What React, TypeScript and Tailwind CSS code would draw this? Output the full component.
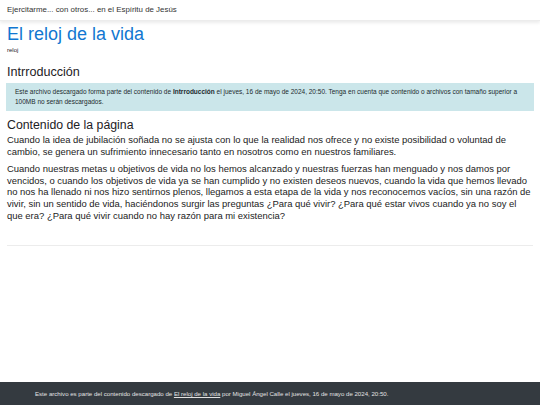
import { FC } from "react";

const Navbar: FC = () => {
  return (
    <div className="h-[21px] bg-white flex items-center px-[7px] shadow-[0_2px_3px_rgba(0,0,0,0.08)] border-b border-[#ececec]">
      <span className="text-[7.9px] text-[#333]">Ejercitarme... con otros... en el Espíritu de Jesús</span>
    </div>
  );
};

const Footer: FC = () => {
  return (
    <div className="mt-auto h-[23px] bg-[#343a40] flex items-center pl-[35px]">
      <p className="text-[6.1px] text-[#e2e2e2]">
        Este archivo es parte del contenido descargado de{" "}
        <a href="/" className="underline">
          El reloj de la vida
        </a>{" "}
        por Miguel Ángel Calle el jueves, 16 de mayo de 2024, 20:50.
      </p>
    </div>
  );
};

export default function App() {
  return (
    <div className="min-h-screen flex flex-col bg-white font-['Liberation_Sans',Arial,sans-serif] text-[#1d2125]">
      <Navbar />
      <div className="px-[7px]">
        <h1 className="text-[18px] leading-[22px] text-[#1177d1] mt-[2px]">El reloj de la vida</h1>
        <p className="text-[6px] leading-[7px] mt-[2px] mb-[10px]">reloj</p>

        <h3 className="text-[12.6px] leading-[16px] mb-[3px]">Intrroducción</h3>
        <div className="bg-[#cbe6ea] text-[#1c2b2e] text-[6.5px] leading-[10px] px-[9px] pt-[4px] pb-[4px] -mx-px">
          Este archivo descargado forma parte del contenido de <span className="font-bold">Intrroducción</span> el
          jueves, 16 de mayo de 2024, 20:50. Tenga en cuenta que contenido o archivos con tamaño superior a 100MB
          no serán descargados.
        </div>

        <h4 className="text-[12.3px] leading-[14px] mt-[7px] mb-[2px]">Contenido de la página</h4>
        <div className="text-[9.45px] leading-[11.6px] text-[#222]">
          <p className="mb-[6px]">
            Cuando la idea de jubilación soñada no se ajusta con lo que la realidad nos ofrece y no existe
            posibilidad o voluntad de cambio, se genera un sufrimiento innecesario tanto en nosotros como en
            nuestros familiares.
          </p>
          <p>
            Cuando nuestras metas u objetivos de vida no los hemos alcanzado y nuestras fuerzas han menguado y
            nos damos por vencidos, o cuando los objetivos de vida ya se han cumplido y no existen deseos nuevos,
            cuando la vida que hemos llevado no nos ha llenado ni nos hizo sentirnos plenos, llegamos a esta etapa
            de la vida y nos reconocemos vacíos, sin una razón de vivir, sin un sentido de vida, haciéndonos
            surgir las preguntas ¿Para qué vivir? ¿Para qué estar vivos cuando ya no soy el que era? ¿Para qué
            vivir cuando no hay razón para mi existencia?
          </p>
        </div>
        <hr className="mt-[24px] border-[#ececec]" />
      </div>
      <Footer />
    </div>
  );
}
